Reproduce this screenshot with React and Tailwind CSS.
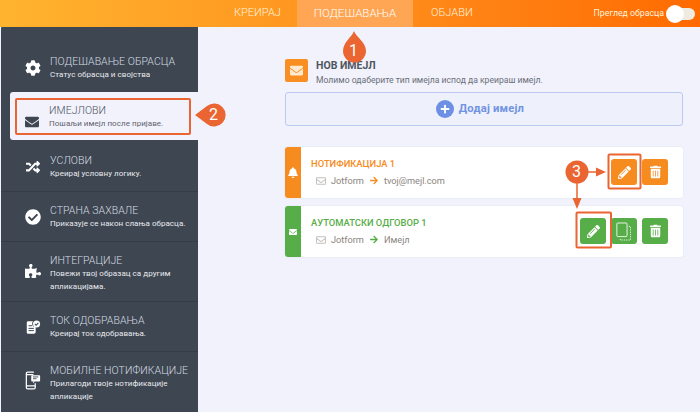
import React from "react";
import { FaCog, FaEnvelope, FaRandom, FaCheckCircle, FaPuzzlePiece, FaBell, FaPencilAlt, FaTrashAlt, FaPlus, FaArrowRight, FaRegEnvelope } from "react-icons/fa";

const font = { fontFamily: 'Roboto,"Open Sans",sans-serif' };

function FlowIcon() {
  return (
    <svg viewBox="0 0 18 18" className="w-[16px] h-[17px]" fill="#fff">
      <path d="M2 3.5a1.5 1.5 0 0 1 1.5-1.5H9a5 5 0 0 0 1 6.5h2V14a2 2 0 0 1-2 2H3.5A1.5 1.5 0 0 1 2 14.5z" />
      <circle cx="13" cy="5" r="4" />
      <path d="M11 5l1.5 1.5L15 3.8" stroke="#3e4652" strokeWidth="1.2" fill="none" />
      <path d="M4 7h4M4 10h6M4 12.5h6" stroke="#3e4652" strokeWidth="1.1" />
    </svg>
  );
}

function PhoneIcon() {
  return (
    <svg viewBox="0 0 18 22" className="w-[16px] h-[21px]" fill="none" stroke="#fff" strokeWidth="1.4">
      <path d="M10 1.5H3A1.5 1.5 0 0 0 1.5 3v16A1.5 1.5 0 0 0 3 20.5h7a1.5 1.5 0 0 0 1.5-1.5v-5" />
      <path d="M1.5 4.5h8M1.5 17h10" />
      <rect x="7" y="5" width="10" height="7" rx="1" fill="#fff" stroke="none" />
      <path d="M9 7h6M9 9h4" stroke="#3e4652" strokeWidth="1" />
      <path d="M9 12v2l2-2" fill="#fff" stroke="none" />
    </svg>
  );
}

function CopyIcon() {
  return (
    <svg viewBox="0 0 20 22" className="w-[17px] h-[19px]" fill="none" stroke="#fff">
      <rect x="1" y="1" width="12" height="16" rx="1" strokeWidth="1" />
      <path d="M15 5h2v16H5v-2" strokeWidth="1" strokeDasharray="1.5 1.2" />
    </svg>
  );
}

function NavItem({ icon, title, sub, className, iconClass = "" }) {
  return (
    <div className={"border-b border-[#353c47] pl-[24px] pr-1 " + className}>
      <div className="flex">
        <div className={"w-[25px] shrink-0 flex items-center text-white " + iconClass}>{icon}</div>
        <div className="min-w-0">
          <div className="text-[10.500px] leading-[14px] font-light tracking-[0.05px] text-[#d5dbe1] whitespace-nowrap">{title}</div>
          <div className="text-[8px] leading-[12.5px] tracking-[0.05px] text-[#e8eaed] whitespace-nowrap">{sub}</div>
        </div>
      </div>
    </div>
  );
}

function Btn({ color, children }) {
  return <div className={"w-[26px] h-[26px] rounded-[3px] flex items-center justify-center text-white " + color}>{children}</div>;
}

function Card({ accent, text, title, icon, from, to, children }) {
  return (
    <div className="flex h-[51px] bg-white rounded-[3px] w-[398px] shadow-[0_0_2px_rgba(120,130,170,0.15)]">
      <div className={"w-[16px] rounded-l-[3px] flex items-center justify-center text-white shrink-0 " + accent}>{icon}</div>
      <div className="ml-[10px] pt-[10px] flex-1">
        <div className={"text-[9.400px] leading-[13px] font-medium " + text}>{title}</div>
        <div className="flex items-center mt-[4px] ml-[4px] text-[9.200px] leading-[13px] text-[#8b8480]">
          <FaRegEnvelope className="w-[12px] h-[10px] opacity-50 mr-[4px]" />
          <span>{from}</span>
          <FaArrowRight className={"w-[10px] h-[9px] mx-[5px] " + text} />
          <span>{to}</span>
        </div>
      </div>
      {children}
    </div>
  );
}

export default function App() {
  return (
    <div className="relative w-[700px] h-[412px] overflow-hidden bg-[#f1f2fc]" style={font}>
      <header className="relative h-[27px] bg-gradient-to-r from-[#ffb42f] to-[#ff6a00] flex pl-[234px] text-[11px] font-light text-[#fff2df]">
        <div className="w-[63px] flex items-center">КРЕИРАЈ</div>
        <div className="w-[116px] flex items-center justify-center bg-[#ffa654] text-white text-[11.500px]">ПОДЕШАВАЊА</div>
        <div className="ml-[18px] flex items-center">ОБЈАВИ</div>
        <div className="ml-auto mr-[5px] flex items-center">
          <span className="text-[8.750px] mr-[3px] font-normal">Преглед обрасца</span>
          <div className="relative w-[28px] h-[12px] rounded-full bg-[#f0ebe0]">
            <div className="absolute -left-[1px] -top-[3px] w-[18px] h-[18px] rounded-full bg-white" />
          </div>
        </div>
      </header>

      <div className="flex h-[385px]">
        <aside className="ml-[1px] w-[197px] bg-[#3e4652] rounded-tl-[1px] shrink-0">
          <NavItem className="h-[65px] pt-[28px] border-b-0" icon={<FaCog className="w-[16px] h-[16px]" />} title="ПОДЕШАВАЊЕ ОБРАСЦА" sub="Статус обрасца и својства" />
          <div className="ml-[9px] h-[48px] bg-[#f1f2fc] rounded-l-[3px] flex pl-[14px] pt-[12px]">
            <div className="w-[25px] flex items-center text-[#3e4652]"><FaEnvelope className="w-[16px] h-[14px]" /></div>
            <div>
              <div className="text-[10.500px] leading-[14px] font-light tracking-[0.05px] text-[#4c515b]">ИМЕЈЛОВИ</div>
              <div className="text-[8px] leading-[12.5px] tracking-[0.05px] text-[#5f636c]">Пошаљи имејл после пријаве.</div>
            </div>
          </div>
          <NavItem className="h-[52px] pt-[14px]" icon={<FaRandom className="w-[16px] h-[14px]" />} title="УСЛОВИ" sub="Креирај условну логику." />
          <NavItem className="h-[50px] pt-[12px]" icon={<FaCheckCircle className="w-[16px] h-[16px]" />} title="СТРАНА ЗАХВАЛЕ" sub="Приказује се након слања обрасца." />
          <NavItem className="h-[60px] pt-[12px]" iconClass="-mt-[6px]" icon={<FaPuzzlePiece className="w-[16px] h-[16px]" />} title="ИНТЕГРАЦИЈЕ" sub={<>Повежи твој образац са другим<br />апликацијама.</>} />
          <NavItem className="h-[50px] pt-[12px]" icon={<FlowIcon />} title="ТОК ОДОБРАВАЊА" sub="Креирај ток одобравања." />
          <NavItem className="h-[60px] pt-[12px] border-b-0" iconClass="-mt-[6px]" icon={<PhoneIcon />} title="МОБИЛНЕ НОТИФИКАЦИЈЕ" sub={<>Прилагоди твоје нотификације<br />апликације</>} />
        </aside>

        <main className="ml-[87px] pt-[32px] w-[398px]">
          <div className="flex h-[23px] items-start">
            <div className="w-[23px] h-[23px] rounded-[2px] bg-[#f98e22] flex items-center justify-center text-[#ffe9cf]"><FaEnvelope className="w-[15px] h-[13px]" /></div>
            <div className="ml-[8px]">
              <div className="text-[10.500px] leading-[14px] font-bold text-[#4f5560]">НОВ ИМЕЈЛ</div>
              <div className="text-[8.600px] leading-[14px] text-[#6a6e78]">Молимо одаберите тип имејла испод да креираш имејл.</div>
            </div>
          </div>
          <div className="mt-[10px] h-[34px] rounded-[3px] border border-[#bccaf2] bg-[#eef0fb] flex items-center justify-center pr-[8px]">
            <div className="w-[18px] h-[18px] rounded-full bg-[#6d8fe4] flex items-center justify-center text-white"><FaPlus className="w-[10px] h-[10px]" /></div>
            <span className="ml-[5px] text-[11.200px] font-bold text-[#7093e2] tracking-[0.2px]">Додај имејл</span>
          </div>
          <div className="mt-[21px] flex flex-col gap-[8px]">
            <Card accent="bg-[#f68b20]" text="text-[#f68b20]" title="НОТИФИКАЦИЈА 1" icon={<FaBell className="w-[10px] h-[11px]" />} from="Jotform" to="tvoj@mejl.com">
              <div className="flex gap-[5px] pt-[12px] pr-[15px]">
                <Btn color="bg-[#f68b20]"><FaPencilAlt className="w-[13px] h-[13px]" /></Btn>
                <Btn color="bg-[#f68b20]"><FaTrashAlt className="w-[11px] h-[14px]" /></Btn>
              </div>
            </Card>
            <Card accent="bg-[#57ad47]" text="text-[#57ad47]" title="АУТОМАТСКИ ОДГОВОР 1" icon={<FaEnvelope className="w-[10px] h-[8px]" />} from="Jotform" to="Имејл">
              <div className="flex gap-[5px] pt-[12px] pr-[15px]">
                <Btn color="bg-[#57ad47]"><FaPencilAlt className="w-[13px] h-[13px]" /></Btn>
                <Btn color="bg-[#57ad47]"><CopyIcon /></Btn>
                <Btn color="bg-[#57ad47]"><FaTrashAlt className="w-[11px] h-[14px]" /></Btn>
              </div>
            </Card>
          </div>
        </main>
      </div>

      {/* annotations */}
      <svg className="absolute left-0 top-0 w-[700px] h-[412px] pointer-events-none" viewBox="0 0 700 412" fill="none">
        <path d="M354 31c2 6 12 11 12 20a11.500 11.500 0 0 1-23 0c0-9 9-14 11-20z" fill="#ea6531" />
        <path d="M195 115l12-9a11.500 11.500 0 1 1 0 18z" fill="#ea6531" />
        <rect x="16" y="99" width="174" height="35" rx="1" stroke="#ea6531" strokeWidth="2" />
        <rect x="608.500" y="154.500" width="32" height="34" rx="1" stroke="#ea6531" strokeWidth="2" />
        <rect x="576.500" y="212.500" width="34.500" height="35" rx="1" stroke="#ea6531" strokeWidth="2" />
        <circle cx="577" cy="172" r="11.500" fill="#ea6531" />
        <path d="M587 172h14M577 182v20" stroke="#ea6531" strokeWidth="1.500" />
        <path d="M606 172l-10-4.500v9zM577 209l-4.500-11h9z" fill="#ea6531" />
      </svg>
      <span className="absolute left-[349px] top-[41px] text-[16px] leading-[20px] text-white">1</span>
      <span className="absolute left-[209px] top-[105px] text-[16px] leading-[20px] text-white">2</span>
      <span className="absolute left-[572px] top-[162px] text-[16px] leading-[20px] text-white">3</span>
    </div>
  );
}
